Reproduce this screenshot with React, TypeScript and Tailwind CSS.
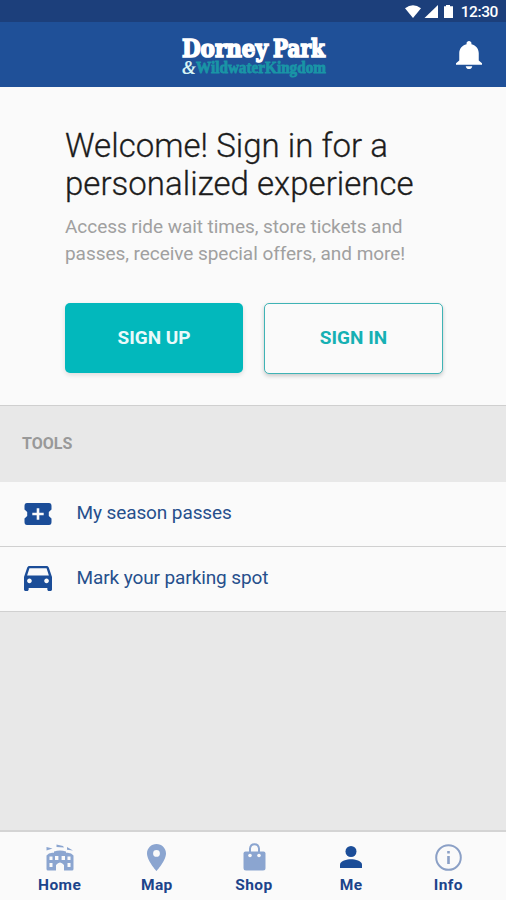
import type { ReactNode } from "react";

interface ToolRowProps {
  icon: ReactNode;
  label: string;
}

interface TabProps {
  icon: ReactNode;
  label: string;
}

const Logo = () => (
  <svg width="150" height="46" viewBox="0 0 150 46" className="overflow-visible">
    <g fontSize="25" fontWeight="bold" fill="#fff" stroke="#fff" strokeWidth="1.7" fontFamily="'DejaVu Serif', serif">
      <text x="4" y="25" textLength="86" lengthAdjust="spacingAndGlyphs">
        Dorney
      </text>
      <text x="95" y="25" textLength="52" lengthAdjust="spacingAndGlyphs">
        Park
      </text>
    </g>
    <text
      x="4"
      y="42"
      textLength="14"
      lengthAdjust="spacingAndGlyphs"
      fontSize="19"
      fontStyle="italic"
      fontWeight="bold"
      fill="#d5f3f4"
      fontFamily="'Liberation Serif', serif"
    >
      &amp;
    </text>
    <text
      x="18"
      y="41"
      textLength="130"
      lengthAdjust="spacingAndGlyphs"
      fontSize="16"
      fontWeight="bold"
      fill="#1995a6"
      stroke="#1995a6"
      strokeWidth="0.8"
      fontFamily="'Liberation Serif', serif"
    >
      WildwaterKingdom
    </text>
  </svg>
);

const StatusBar = () => (
  <div className="flex h-[22px] shrink-0 items-center justify-end bg-[#1c3f7b] pr-2 text-white">
    <svg width="49" height="15" viewBox="0 0 49 15" fill="currentColor">
      <path d="M0 4.2Q8 -1.8 16 4.2L8 14Z" />
      <path d="M33 1V14H19.5Z" />
      <path d="M41 1H45V2.2H48V14H39V2.2H41Z" />
    </svg>
    <span className="mt-0.5 ml-[7px] text-[15.5px] leading-[20px] font-medium tracking-[-0.4px]">12:30</span>
  </div>
);

const ToolRow = ({ icon, label }: ToolRowProps) => (
  <li className="flex h-[65px] items-center border-b border-[#d0d0d0] bg-[#fafafa] pl-6">
    <span className="flex w-[52.5px] items-center text-[#1b4d98]">{icon}</span>
    <span className="pb-[2px] text-[19px] tracking-[-0.1px] text-[#264f8c]">{label}</span>
  </li>
);

const Tab = ({ icon, label }: TabProps) => (
  <button className="flex w-[97.2px] flex-col items-center pt-[11px]">
    <span className="flex h-7 items-center">{icon}</span>
    <span className="mt-[4px] text-[15.5px] leading-5 font-bold tracking-[0.4px] text-[#1c448b]">{label}</span>
  </button>
);

const TicketIcon = () => (
  <svg width="28" height="22" viewBox="0 0 28 22" fill="currentColor">
    <path
      fillRule="evenodd"
      d="M3 0H25Q27.5 0 27.5 3V6.5L24.8 9V13L27.5 15.5V19Q27.5 22 25 22H3Q.5 22 .5 19V15.5L3.2 13V9L.5 6.5V3Q.5 0 3 0ZM12.7 5.3V9.7H8.3V12.3H12.7V16.7H15.3V12.3H19.7V9.7H15.3V5.3Z"
    />
  </svg>
);

const CarIcon = () => (
  <svg width="28" height="25" viewBox="3 5 18 16" preserveAspectRatio="none" fill="currentColor" className="-mt-0.5">
    <path d="M18.92 6.01C18.72 5.42 18.16 5 17.5 5h-11c-.66 0-1.21.42-1.42 1.01L3 12v8c0 .55.45 1 1 1h1c.55 0 1-.45 1-1v-1h12v1c0 .55.45 1 1 1h1c.55 0 1-.45 1-1v-8l-2.08-5.99zM6.5 16c-.83 0-1.5-.67-1.5-1.5S5.67 13 6.5 13s1.5.67 1.5 1.5S7.33 16 6.5 16zm11 0c-.83 0-1.5-.67-1.5-1.5s.67-1.5 1.5-1.5 1.5.67 1.5 1.5-.67 1.5-1.5 1.5zM5 11l1.5-4.5h11L19 11H5z" />
  </svg>
);

const HomeIcon = () => (
  <svg width="28" height="27" viewBox="0 0 28 27" fill="#8ba5d0">
    <path d="M.5 3 6.5 4.5 .5 6.5ZM10.5 .5 17 2 18 3.5 10.5 3ZM21 3 27 6.4 21 5.8Z" />
    <path
      fillRule="evenodd"
      d="M.5 11.5Q3 8 8 8.8V7.5Q14 5.5 20 7.5V8.8Q25 8 27.5 11.5V25Q27.5 26.5 26 26.5H18V21Q14 16 10 21V26.5H2Q.5 26.5.5 25ZM3.5 12.5V16H6.5V12.5ZM9 12V16H12.4V12ZM15.6 12V16H19V12ZM21.5 12.5V16H24.5V12.5ZM3.5 19V23H6.5V19ZM21.5 19V23H24.5V19Z"
    />
  </svg>
);

const PinIcon = () => (
  <svg width="19" height="27" viewBox="5 2 14 20" preserveAspectRatio="none" fill="#8ba5d0">
    <path d="M12 2C8.13 2 5 5.13 5 9c0 5.25 7 13 7 13s7-7.75 7-13c0-3.87-3.13-7-7-7zm0 9.5a2.5 2.5 0 0 1 0-5 2.5 2.5 0 0 1 0 5z" />
  </svg>
);

const BagIcon = () => (
  <svg width="23" height="28" viewBox="0 0 23 28" fill="#8ba5d0">
    <path d="M7 12V5.5Q7.5 1.2 11.5 1.2T16 5.5V12" fill="none" stroke="#8ba5d0" strokeWidth="2" />
    <path d="M2.5 8.5H20.5Q22.5 8.5 22.5 10.5V25Q22.5 27.5 20 27.5H3Q.5 27.5.5 25V10.5Q.5 8.5 2.5 8.5Z" />
    <circle cx="7" cy="12.5" r="1.8" fill="#fafafa" />
    <circle cx="16" cy="12.5" r="1.8" fill="#fafafa" />
  </svg>
);

const PersonIcon = () => (
  <svg width="22" height="22" viewBox="0 0 22 22" fill="#1b4d98">
    <circle cx="11" cy="5.5" r="5.5" />
    <path d="M0 22V18.5C0 15 7 13.3 11 13.3S22 15 22 18.5V22Z" />
  </svg>
);

const InfoIcon = () => (
  <svg width="27" height="27" viewBox="0 0 27 27" fill="#8ba0c6">
    <circle cx="13.5" cy="13.5" r="12.3" fill="none" stroke="#8ba0c6" strokeWidth="2" />
    <path d="M12.2 7H14.8V9.6H12.2ZM12.2 12H14.8V20H12.2Z" />
  </svg>
);

export default function App() {
  return (
    <div className="flex h-[900px] w-[506px] flex-col overflow-hidden bg-[#e8e8e8] font-[Roboto,sans-serif]">
      <StatusBar />

      <header className="grid h-[65px] shrink-0 grid-cols-[1fr_150px_1fr] items-center bg-[#1f5098]">
        <span />
        <Logo />
        <button className="mr-6 justify-self-end text-white">
          <svg width="26" height="28" viewBox="4 2.5 16 19.5" preserveAspectRatio="none" fill="currentColor">
            <path d="M12 22c1.1 0 2-.9 2-2h-4c0 1.1.89 2 2 2zm6-6v-5c0-3.07-1.64-5.64-4.5-6.32V4c0-.83-.67-1.5-1.5-1.5s-1.5.67-1.5 1.5v.68C7.63 5.36 6 7.92 6 11v5l-2 2v1h16v-1l-2-2z" />
          </svg>
        </button>
      </header>

      <section className="h-[319px] shrink-0 border-b border-[#cfcfcf] bg-[#fafafa] pt-10 pr-[63px] pl-[65px]">
        <h1 className="text-[33px] leading-[38px] font-light tracking-[0.03px] whitespace-nowrap text-[#1c1c1c] [-webkit-text-stroke:0.3px_#1c1c1c]">
          Welcome! Sign in for a
          <br />
          personalized experience
        </h1>
        <p className="mt-[10px] text-[19px] leading-[27px] tracking-[-0.05px] whitespace-nowrap text-[#a0a0a0]">
          Access ride wait times, store tickets and
          <br />
          passes, receive special offers, and more!
        </p>
        <div className="mt-9 flex gap-[21px]">
          <button className="h-[70px] w-[178px] rounded-[5px] bg-[#02b8bc] text-[19px] font-bold text-[#eafafa] shadow-[0_2px_5px_rgba(0,0,0,0.12)]">
            SIGN UP
          </button>
          <button className="h-[71px] w-[179px] rounded-[5px] border-[1.5px] border-[#3fb3b5] bg-[#fafafa] text-[19px] font-bold text-[#16b0b3] shadow-[0_2px_4px_rgba(0,0,0,0.2)]">
            SIGN IN
          </button>
        </div>
      </section>

      <h2 className="flex h-[76px] shrink-0 items-center pl-[22px] text-base font-bold text-[#999]">TOOLS</h2>
      <ul>
        <ToolRow icon={<TicketIcon />} label="My season passes" />
        <ToolRow icon={<CarIcon />} label="Mark your parking spot" />
      </ul>

      <nav className="mt-auto flex h-[70px] shrink-0 justify-center border-t-2 border-[#d4d4d4] bg-[#fafafa] pl-[2px]">
        <Tab icon={<HomeIcon />} label="Home" />
        <Tab icon={<PinIcon />} label="Map" />
        <Tab icon={<BagIcon />} label="Shop" />
        <Tab icon={<PersonIcon />} label="Me" />
        <Tab icon={<InfoIcon />} label="Info" />
      </nav>
    </div>
  );
}
